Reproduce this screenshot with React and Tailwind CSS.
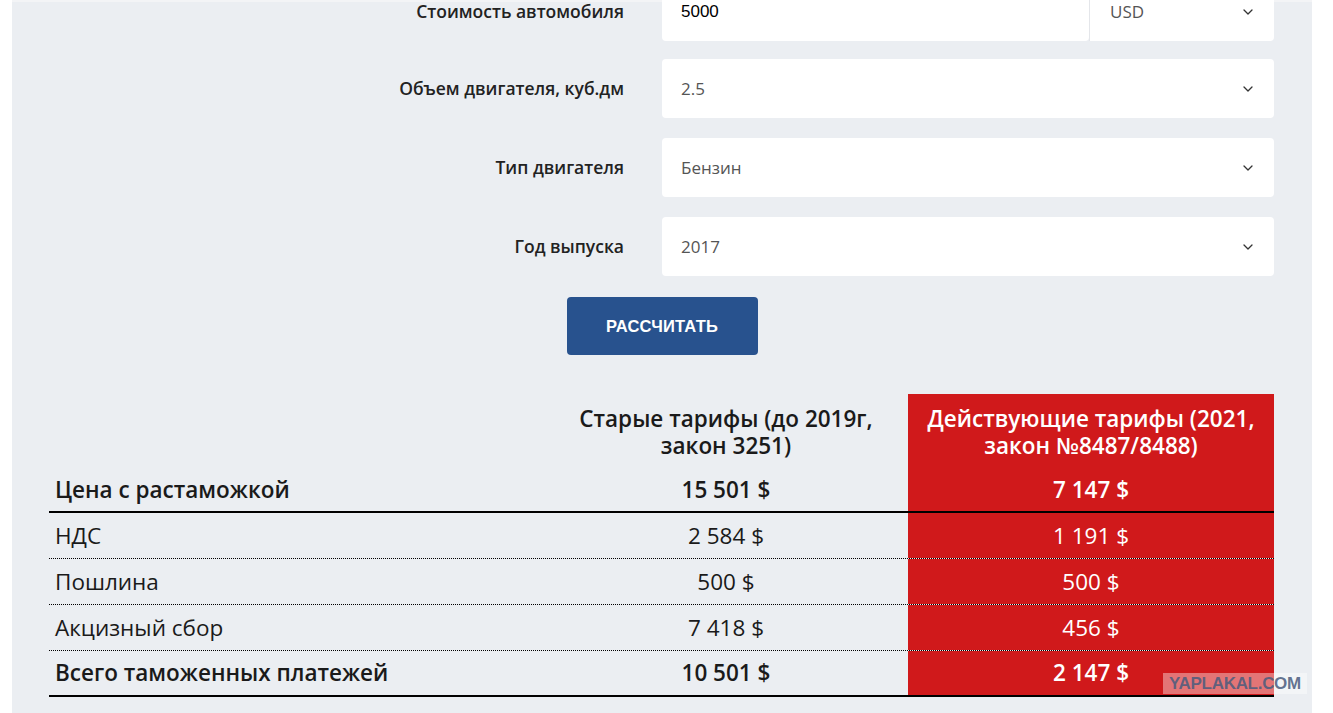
import React from "react";

const Chevron = () => (
  <svg width="10" height="6" viewBox="0 0 10 6" fill="none" className="shrink-0">
    <path d="M1 1l4 4 4-4" stroke="#333" strokeWidth="1.3" strokeLinecap="round" strokeLinejoin="round" />
  </svg>
);

const FormRow = ({ label, className = "", children }) => (
  <div className={`flex items-center h-[59px] ${className}`}>
    <div className="w-[612px] text-right text-[17.5px] font-semibold text-[#222]">{label}</div>
    <div className="ml-[38px] w-[612px] h-full">{children}</div>
  </div>
);

const SelectBox = ({ value }) => (
  <div className="h-full bg-white rounded-[4px] flex items-center justify-between pl-[19px] pr-[21px]">
    <span className="text-[17px] text-[#555]">{value}</span>
    <Chevron />
  </div>
);

const rows = [
  { name: "НДС", old: "2 584 $", now: "1 191 $" },
  { name: "Пошлина", old: "500 $", now: "500 $" },
  { name: "Акцизный сбор", old: "7 418 $", now: "456 $" },
];

export default function App() {
  return (
    <div className="min-h-[713px] bg-white font-['Open_Sans','Noto_Sans',sans-serif]">
      <div className="relative ml-[12px] w-[1300px] h-[713px] overflow-hidden bg-[#ebeef2] shadow-[inset_0_2px_0_#f3f4f6]">
        <div className="-mt-[18px] flex flex-col">
          <FormRow label="Стоимость автомобиля">
            <div className="flex h-full">
              <div className="w-[427px] bg-white rounded-[4px] flex items-center pl-[19px]">
                <span className="text-[17px] text-black font-['Liberation_Sans',sans-serif]">5000</span>
              </div>
              <div className="w-px bg-[#e4e6ea]" />
              <div className="flex-1 bg-white rounded-r-[4px] flex items-center justify-between pl-[20px] pr-[21px]">
                <span className="text-[17px] text-[#555]">USD</span>
                <Chevron />
              </div>
            </div>
          </FormRow>
          <FormRow label="Объем двигателя, куб.дм" className="mt-[18px]">
            <SelectBox value="2.5" />
          </FormRow>
          <FormRow label="Тип двигателя" className="mt-[20px]">
            <SelectBox value="Бензин" />
          </FormRow>
          <FormRow label="Год выпуска" className="mt-[20px]">
            <SelectBox value="2017" />
          </FormRow>
        </div>

        <div className="flex justify-center mt-[21px]">
          <button className="w-[191px] h-[58px] rounded-[4px] bg-[#28528e] text-white text-[16.5px] font-bold font-['Liberation_Sans',sans-serif] tracking-[0.2px]">
            РАССЧИТАТЬ
          </button>
        </div>

        <div className="ml-[37px] mt-[39px] w-[1225px] text-[#1a1a1a] text-[22.5px]">
          <div className="grid grid-cols-[495px_364px_366px]">
            <div />
            <div className="flex items-center justify-center text-center font-semibold leading-[27px] pt-[11px] pb-[9px]">
              Старые тарифы (до 2019г,
              <br />
              закон 3251)
            </div>
            <div className="flex items-center justify-center text-center font-semibold leading-[27px] pt-[11px] pb-[9px] bg-[#d0191b] text-white">
              Действующие тарифы (2021,
              <br />
              закон №8487/8488)
            </div>
          </div>

          <div className="grid grid-cols-[495px_364px_366px] h-[45px] border-b-2 border-black font-semibold">
            <div className="flex items-center pl-[6px]">Цена с растаможкой</div>
            <div className="flex items-center justify-center">15 501 $</div>
            <div className="flex items-center justify-center bg-[#d0191b] text-white">7 147 $</div>
          </div>

          {rows.map((r) => (
            <div key={r.name} className="grid grid-cols-[495px_364px_366px] h-[46px] border-b border-dotted border-black">
              <div className="flex items-center pl-[6px]">{r.name}</div>
              <div className="flex items-center justify-center">{r.old}</div>
              <div className="flex items-center justify-center bg-[#d0191b] text-white">{r.now}</div>
            </div>
          ))}

          <div className="grid grid-cols-[495px_364px_366px] h-[46px] border-b-2 border-black font-semibold">
            <div className="flex items-center pl-[6px]">Всего таможенных платежей</div>
            <div className="flex items-center justify-center">10 501 $</div>
            <div className="flex items-center justify-center bg-[#d0191b] text-white">2 147 $</div>
          </div>
        </div>

        <div className="absolute left-[1151px] top-[673px] w-[144px] h-[21px] bg-white/40 flex items-center justify-center">
          <span className="text-[17px] font-black tracking-[-0.3px] text-[#4a5c7e]/85 font-['Liberation_Sans',sans-serif] leading-none">
            YAPLAKAL.COM
          </span>
        </div>
      </div>
    </div>
  );
}
